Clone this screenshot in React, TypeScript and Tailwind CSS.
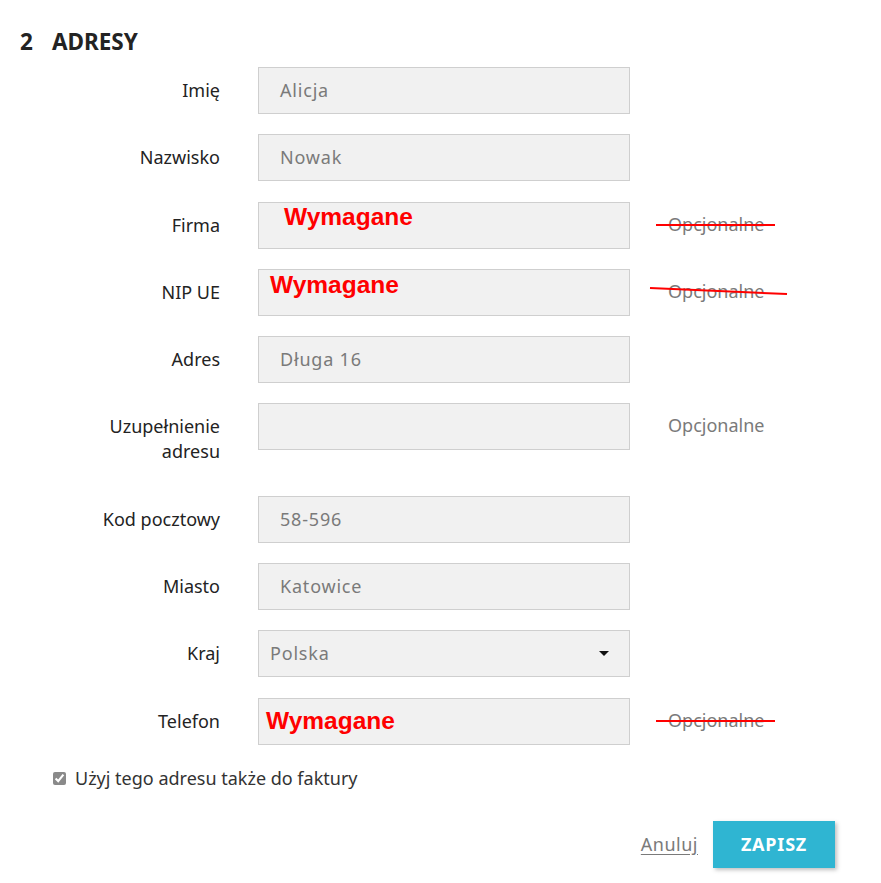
const font = { fontFamily: '"Noto Sans", "Open Sans", sans-serif' };

type Row = {
  label: string[];
  value?: string;
  required?: { pl: string; pt: string };
  note?: "plain" | "flat" | "slant";
  select?: boolean;
};

const rows: Row[] = [
  { label: ["Imię"], value: "Alicja" },
  { label: ["Nazwisko"], value: "Nowak" },
  { label: ["Firma"], required: { pl: "pl-[25px]", pt: "pt-[0px]" }, note: "flat" },
  { label: ["NIP UE"], required: { pl: "pl-[11px]", pt: "pt-[1px]" }, note: "slant" },
  { label: ["Adres"], value: "Długa 16" },
  { label: ["Uzupełnienie", "adresu"], note: "plain" },
  { label: ["Kod pocztowy"], value: "58-596" },
  { label: ["Miasto"], value: "Katowice" },
  { label: ["Kraj"], select: true, value: "Polska" },
  { label: ["Telefon"], required: { pl: "pl-[7px]", pt: "pt-[8px]" }, note: "flat" },
];

function Note({ kind }: { kind: "plain" | "flat" | "slant" }) {
  if (kind === "plain") {
    return <span className="text-[18px] text-[#7a7a7a]">Opcjonalne</span>;
  }
  return (
    <span className="relative inline-block text-[18px] text-[#7a7a7a]">
      Opcjonalne
      <svg
        className="absolute left-[-12px] top-[10px] overflow-visible"
        width="120"
        height="10"
        viewBox="0 0 120 10"
      >
        {kind === "flat" ? (
          <line x1="0" y1="3" x2="119" y2="3" stroke="#ff0000" strokeWidth="2" />
        ) : (
          <line x1="-6" y1="-1" x2="131" y2="5" stroke="#ff0000" strokeWidth="2" />
        )}
      </svg>
    </span>
  );
}

function Field({ row }: { row: Row }) {
  const base =
    "h-[47px] w-[372px] border border-[#cfcfcf] bg-[#f1f1f1] text-[18px] tracking-[0.8px] text-[#7a7a7a]";
  if (row.required) {
    return (
      <div className={`${base} ${row.required.pl} ${row.required.pt}`}>
        <span
          className="text-[24.5px] font-bold leading-[28px] tracking-normal text-[#ff0000]"
          style={{ fontFamily: '"Liberation Sans", Arial, sans-serif' }}
        >
          Wymagane
        </span>
      </div>
    );
  }
  if (row.select) {
    return (
      <div className={`${base} flex items-center justify-between pl-[11px] pr-[20px]`}>
        <span>{row.value}</span>
        <svg width="10" height="6" viewBox="0 0 10 6">
          <path d="M0 0 L10 0 L5 5 Z" fill="#111" />
        </svg>
      </div>
    );
  }
  return (
    <div className={`${base} flex items-center pl-[21px]`}>
      <span>{row.value}</span>
    </div>
  );
}

export default function App() {
  return (
    <div className="min-h-screen bg-white text-[#232323]" style={font}>
      <div className="pt-[27px]">
        <h2 className="pl-[20px] text-[22.5px] font-bold leading-[30px] text-[#232323]">
          <span>2</span>
          <span className="ml-[19px]">ADRESY</span>
        </h2>

        <div className="mt-[10px] flex flex-col gap-[20.3px]">
          {rows.map((row) => (
            <div key={row.label[0]} className="flex items-start">
              <div className="w-[220px] py-[11px] text-right text-[18px] leading-[25px]">
                {row.label.map((l) => (
                  <div key={l}>{l}</div>
                ))}
              </div>
              <div className="ml-[38px]">
                <Field row={row} />
              </div>
              {row.note && (
                <div className="ml-[38px] pt-[10px] leading-[25px]">
                  <Note kind={row.note} />
                </div>
              )}
            </div>
          ))}
        </div>

        <label className="mt-[20px] flex items-center pl-[53px] text-[18px] text-[#333]">
          <input
            type="checkbox"
            defaultChecked
            className="m-0 h-[13px] w-[13px] accent-[#8a8a8a]"
          />
          <span className="ml-[9px]">Użyj tego adresu także do faktury</span>
        </label>

        <div className="mt-[29px] flex items-center justify-end pr-[46px]">
          <a
            href="#"
            className="text-[18px] tracking-[0.5px] text-[#7a7a7a] underline underline-offset-[3px]"
          >
            Anuluj
          </a>
          <button
            type="button"
            className="ml-[15px] h-[47px] w-[122px] bg-[#2fb5d2] text-[18px] font-bold tracking-[0.8px] text-white shadow-[2px_2px_4px_rgba(0,0,0,0.25)]"
          >
            ZAPISZ
          </button>
        </div>
      </div>
    </div>
  );
}
